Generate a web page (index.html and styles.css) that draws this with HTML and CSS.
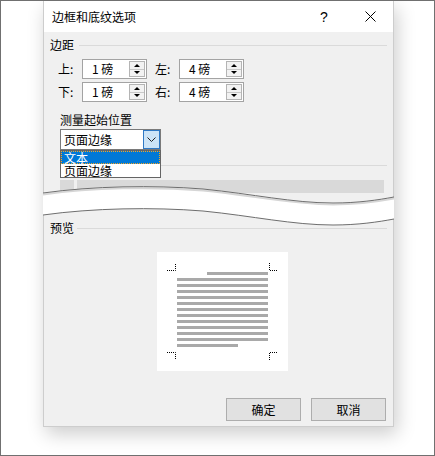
FILE: index.html
```html
<!DOCTYPE html>
<html lang="zh-CN">
<head>
    <meta charset="UTF-8">
    <title>边框和底纹选项</title>
    <link rel="stylesheet" href="styles.css">
</head>
<body>
    <div class="screen">
        <div class="dialog">
            <div class="titlebar">
                <span class="title">边框和底纹选项</span>
                <span class="title-btn help">?</span>
                <span class="title-btn close">
                    <svg width="11" height="11" viewBox="0 0 11 11"><path d="M0.5 0.5 L10.5 10.5 M10.5 0.5 L0.5 10.5" stroke="#000" stroke-width="1" fill="none"/></svg>
                </span>
            </div>

            <div class="content">
                <div class="group-head"><span>边距</span><i></i></div>

                <div class="margin-row">
                    <label class="field-label">上:</label>
                    <div class="spin-input"><span>1 磅</span><div class="spinner"><b class="up"></b><b class="down"></b></div></div>
                    <label class="field-label second">左:</label>
                    <div class="spin-input"><span>4 磅</span><div class="spinner"><b class="up"></b><b class="down"></b></div></div>
                </div>
                <div class="margin-row">
                    <label class="field-label">下:</label>
                    <div class="spin-input"><span>1 磅</span><div class="spinner"><b class="up"></b><b class="down"></b></div></div>
                    <label class="field-label second">右:</label>
                    <div class="spin-input"><span>4 磅</span><div class="spinner"><b class="up"></b><b class="down"></b></div></div>
                </div>

                <div class="measure">
                    <div class="measure-label">测量起始位置</div>
                    <div class="combo">
                        <span>页面边缘</span>
                        <div class="combo-btn">
                            <svg width="9" height="5" viewBox="0 0 9 5"><path d="M0.5 0.5 L4.5 4.5 L8.5 0.5" stroke="#222" stroke-width="1" fill="none"/></svg>
                        </div>
                        <ul class="combo-list">
                            <li class="selected">文本</li>
                            <li>页面边缘</li>
                        </ul>
                    </div>
                </div>

                <div class="group-head hidden-head"><i></i></div>
                <div class="gray-bar"><span class="cell-a"></span><span class="cell-b"></span></div>

                <div class="group-head preview-head"><span>预览</span><i></i></div>

                <div class="preview">
                    <svg width="131" height="119" viewBox="0 0 131 119">
                        <g stroke="#000" stroke-width="1" stroke-dasharray="1 1" fill="none">
                            <path d="M10 18.5 H18.5 V11"/>
                            <path d="M112.5 11 V18.5 H121"/>
                            <path d="M10 100.5 H18.5 V108"/>
                            <path d="M112.5 108 V100.5 H121"/>
                        </g>
                        <g fill="#a9a9a9">
                            <rect x="50" y="20" width="61" height="3"/>
                            <rect x="20" y="26" width="91" height="3"/>
                            <rect x="20" y="32" width="91" height="3"/>
                            <rect x="20" y="38" width="91" height="3"/>
                            <rect x="20" y="44" width="91" height="3"/>
                            <rect x="20" y="50" width="91" height="3"/>
                            <rect x="20" y="56" width="91" height="3"/>
                            <rect x="20" y="62" width="91" height="3"/>
                            <rect x="20" y="68" width="91" height="3"/>
                            <rect x="20" y="74" width="91" height="3"/>
                            <rect x="20" y="80" width="91" height="3"/>
                            <rect x="20" y="86" width="91" height="3"/>
                            <rect x="20" y="92" width="61" height="3"/>
                        </g>
                    </svg>
                </div>

                <div class="buttons">
                    <button class="btn">确定</button>
                    <button class="btn">取消</button>
                </div>
            </div>

            <!-- torn-paper strip laid over the dialog -->
            <svg class="tear" width="351" height="46" viewBox="0 0 351 46">
                <path d="M0 9 C50 2 110 1 160 5 C210 10 250 19 290 19 C315 19 335 16 351 13 L351 35 C335 38 315 41 290 41 C250 41 210 32 160 27 C110 23 50 24 0 31 Z" fill="#fff"/>
                <path d="M0 10.5 C50 3.5 110 2.5 160 6.5 C210 11.5 250 20.5 290 20.5 C315 20.5 335 17.5 351 14.5" stroke="#d6d6d6" stroke-width="2" fill="none"/>
                <path d="M0 9 C50 2 110 1 160 5 C210 10 250 19 290 19 C315 19 335 16 351 13" stroke="#6e6e6e" stroke-width="1" fill="none"/>
                <path d="M0 31 C50 24 110 23 160 27 C210 32 250 41 290 41 C315 41 335 38 351 35" stroke="#6e6e6e" stroke-width="1" fill="none"/>
            </svg>
        </div>
    </div>
</body>
</html>
```

FILE: styles.css
```css
/* Base */
body {
    margin: 0;
    background-color: #fff;
    font-family: "Noto Sans CJK SC", "Liberation Sans", sans-serif;
    font-size: 12px;
    color: #000;
}

.screen {
    width: 435px;
    height: 456px;
    box-sizing: border-box;
    border: 1px solid #707070;
    padding-left: 42px;
    overflow: hidden;
    background-color: #fff;
}

.dialog {
    position: relative;
    width: 351px;
    height: 426px;
    box-sizing: border-box;
    border: 1px solid #cdcdcd;
    border-top: none;
    background-color: #f0f0f0;
    box-shadow: 3px 7px 18px rgba(0, 0, 0, 0.2);
}

/* Title bar */
.titlebar {
    height: 31px;
    background-color: #fff;
    display: flex;
    align-items: center;
    padding-left: 8px;
}

.title {
    flex: 1;
    line-height: 16px;
}

.title-btn {
    width: 46px;
    height: 31px;
    display: flex;
    align-items: center;
    justify-content: center;
}

.help {
    font-family: "Liberation Sans", sans-serif;
    font-size: 14px;
}

/* Body */
.content {
    padding: 5px 6px 5px 6px;
}

.group-head {
    display: flex;
    align-items: center;
    height: 16px;
    line-height: 16px;
}

.group-head span {
    margin-right: 5px;
}

.group-head i {
    flex: 1;
    height: 1px;
    background-color: #dadada;
}

.margin-row {
    display: flex;
    align-items: center;
    height: 20px;
    margin-top: 6px;
    padding-left: 8px;
}

.margin-row + .margin-row {
    margin-top: 3px;
}

.field-label {
    width: 24px;
    line-height: 16px;
}

.field-label.second {
    margin-left: 8px;
}

.spin-input {
    width: 65px;
    height: 20px;
    box-sizing: border-box;
    border: 1px solid #a3a3a3;
    background-color: #fff;
    display: flex;
    align-items: center;
    padding-left: 9px;
}

.spin-input span {
    flex: 1;
    line-height: 16px;
}

.spinner {
    width: 16px;
    height: 16px;
    box-sizing: border-box;
    border: 1px solid #b4b4b4;
    background-color: #f2f2f2;
    margin-right: 1px;
    display: flex;
    flex-direction: column;
}

.spinner b {
    flex: 1;
    display: flex;
    align-items: center;
    justify-content: center;
}

.spinner b.up {
    border-bottom: 1px solid #c8c8c8;
}

.spinner b::after {
    content: "";
    border-left: 3px solid transparent;
    border-right: 3px solid transparent;
}

.spinner b.up::after {
    border-bottom: 3px solid #000;
}

.spinner b.down::after {
    border-top: 3px solid #000;
}

/* Measure from combo */
.measure {
    margin-top: 10px;
    padding-left: 10px;
}

.measure-label {
    line-height: 16px;
}

.combo {
    position: relative;
    width: 101px;
    height: 21px;
    margin-top: 1px;
    box-sizing: border-box;
    border: 1px solid #7a7a7a;
    background-color: #fff;
    display: flex;
    align-items: center;
    padding-left: 3px;
}

.combo span {
    flex: 1;
    line-height: 16px;
}

.combo-btn {
    width: 17px;
    height: 19px;
    box-sizing: border-box;
    border: 1px solid #2f79c5;
    background-color: #cce4f7;
    display: flex;
    align-items: center;
    justify-content: center;
}

.combo-list {
    position: absolute;
    left: -1px;
    top: 20px;
    width: 101px;
    height: 28px;
    margin: 0;
    padding: 0;
    list-style: none;
    box-sizing: border-box;
    border: 1px solid #646464;
    background-color: #fff;
    z-index: 5;
}

.combo-list li {
    height: 13px;
    line-height: 13px;
    padding-left: 3px;
    box-sizing: border-box;
}

.combo-list li.selected {
    background-color: #0078d7;
    color: #fff;
    line-height: 11px;
    padding-left: 2px;
    border: 1px dotted #f5a623;
}

.hidden-head {
    margin-top: 7px;
    padding-left: 10px;
}

.gray-bar {
    display: flex;
    height: 13px;
    margin-top: 7px;
    padding-left: 10px;
}

.cell-a {
    width: 14px;
    background-color: #d9d9d9;
}

.cell-b {
    width: 307px;
    margin-left: 3px;
    background-color: #d9d9d9;
}

.preview-head {
    margin-top: 27px;
}

.preview-head span {
    margin-right: 3px;
}

.preview {
    width: 131px;
    height: 119px;
    margin-top: 16px;
    margin-left: 107px;
    background-color: #fff;
}

.preview svg {
    display: block;
}

.buttons {
    display: flex;
    justify-content: flex-end;
    gap: 10px;
    margin-top: 27px;
    padding-right: 1px;
}

.btn {
    width: 75px;
    height: 23px;
    border: 1px solid #adadad;
    background-color: #e1e1e1;
    font-family: inherit;
    font-size: 12px;
    padding: 0;
}

/* Torn strip overlay */
.tear {
    position: absolute;
    left: -1px;
    top: 183px;
    display: block;
}
```
